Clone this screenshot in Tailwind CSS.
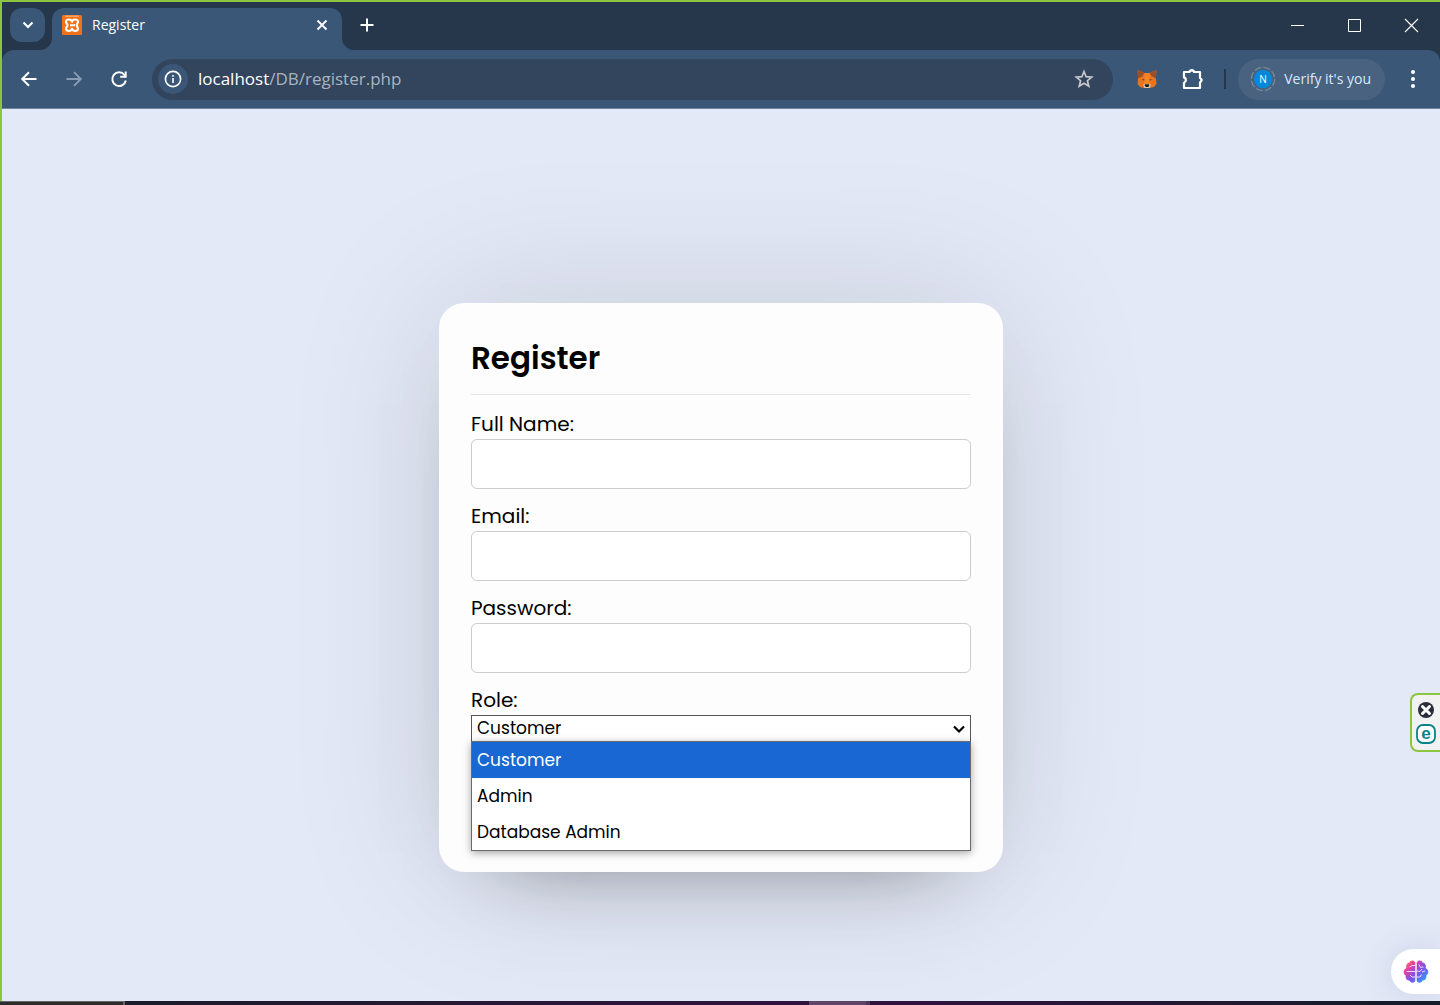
<!DOCTYPE html>
<html lang="en">
<head>
<meta charset="utf-8">
<meta name="viewport" content="width=device-width, initial-scale=1">
<title>Register</title>
<script src="https://cdn.jsdelivr.net/npm/@tailwindcss/browser@4"></script>
</head>
<body class="flex min-h-screen flex-col overflow-x-hidden bg-[#e4e9f7] font-['Poppins','Inter',sans-serif] text-black">
<div class="flex grow flex-col border-t-2 border-l-2 border-[#8cc63f]">

  <!-- Browser chrome -->
  <header class="relative z-10 bg-[#26374c] font-['Segoe_UI','Open_Sans',sans-serif] text-white">
    <div class="flex h-12 items-start">
      <button aria-label="Search tabs" class="mt-1.5 ml-2 flex h-[34px] w-[35px] items-center justify-center rounded-xl bg-[#3a5777]">
        <svg class="size-4" viewBox="0 0 16 16" fill="none" stroke="#fff" stroke-width="2"><path d="M3.500 5.500 8 10l4.500-4.500"/></svg>
      </button>
      <div class="relative mt-1.5 ml-[7px] flex h-[42px] w-[290px] items-center rounded-t-xl bg-[#3a5777] pr-3 pb-2 pl-2.5">
        <svg class="absolute bottom-0 -left-3 size-3" viewBox="0 0 12 12"><path d="M12 0v12H0A12 12 0 0 0 12 0Z" fill="#3a5777"/></svg>
        <svg class="absolute -right-3 bottom-0 size-3" viewBox="0 0 12 12"><path d="M0 0v12h12A12 12 0 0 1 0 0Z" fill="#3a5777"/></svg>
        <svg class="size-5" viewBox="0 0 20 20"><rect width="20" height="20" rx="1.500" fill="#f0731b"/><path d="M3 1.200h14" stroke="#f9b47c" stroke-width="1.200"/><path d="M10 6.800C9.500 3.800 4 3.800 4 7c0 1.500 1.500 1.800 1.500 3.300S4 12 4 13.500c0 3.200 5.500 3.200 6 .2.500 3 6 3 6-.2 0-1.500-1.300-1.900-1.300-3.400S16 8.500 16 7c0-3.200-5.500-3.200-6-.2ZM8 10.200h5" fill="none" stroke="#fff" stroke-width="2.100" stroke-linejoin="round"/></svg>
        <span class="ml-2.5 grow text-sm">Register</span>
        <button aria-label="Close tab"><svg class="size-4" viewBox="0 0 16 16" stroke="#fff" stroke-width="1.800"><path d="m3.500 3.500 9 9m0-9-9 9"/></svg></button>
      </div>
      <button aria-label="New tab" class="mt-[15px] ml-[17px]"><svg class="size-4" viewBox="0 0 16 16" stroke="#fff" stroke-width="2"><path d="M8 1.500v13M1.500 8h13"/></svg></button>
      <div class="mt-4 mr-[21px] ml-auto flex gap-[42px]">
        <button aria-label="Minimize"><svg class="size-[15px]" viewBox="0 0 15 15" stroke="#fff"><path d="M1 7.500h13"/></svg></button>
        <button aria-label="Maximize"><svg class="size-[15px]" viewBox="0 0 15 15" fill="none" stroke="#fff"><path d="M1.500 1.500h12v12h-12z"/></svg></button>
        <button aria-label="Close window"><svg class="size-[15px]" viewBox="0 0 15 15" stroke="#fff" stroke-width="1.100"><path d="m1 1 13 13m0-13L1 14"/></svg></button>
      </div>
    </div>

    <div class="flex h-[59px] items-center rounded-t-xl border-b border-[#7186a2] bg-[#3a5777] px-[17px]">
      <nav class="flex items-center gap-[25px]">
        <button aria-label="Back"><svg class="size-5" viewBox="0 0 20 20" fill="none" stroke="#fff" stroke-width="2"><path d="M17.500 10H3.500M10 3.200 3.200 10l6.800 6.800"/></svg></button>
        <button aria-label="Forward"><svg class="size-5" viewBox="0 0 20 20" fill="none" stroke="#8b9db3" stroke-width="1.800"><path d="M2.500 10h14M10 3.200l6.800 6.800-6.800 6.800"/></svg></button>
        <button aria-label="Reload"><svg class="size-5" viewBox="0 0 20 20" fill="none" stroke="#fff" stroke-width="2"><path d="M16.800 11.500A6.800 6.800 0 1 1 15.500 6l1.300 1.500"/><path d="M16.700 2.500v5.300h-5.500"/></svg></button>
      </nav>
      <div class="ml-[23px] flex h-[41px] grow items-center rounded-full bg-[#32455c] pr-[19px] pl-1.5">
        <button aria-label="View site information" class="flex size-[30px] items-center justify-center rounded-full bg-[#3a5777]">
          <svg class="size-[18px]" viewBox="0 0 18 18" fill="none" stroke="#fff" stroke-width="1.600"><circle cx="9" cy="9" r="7.600"/><path d="M9 8v5M9 5v1.700"/></svg>
        </button>
        <p class="ml-2.5 grow text-[17px] text-[#a9b4c3]"><span class="text-white">localhost</span>/DB/register.php</p>
        <button aria-label="Bookmark this tab"><svg class="size-5" viewBox="0 0 20 20" fill="none" stroke="#c6c8cc" stroke-width="1.700"><path d="m10 2.500 2.100 5.200 5.600.4-4.300 3.600 1.400 5.500L10 14.200l-4.800 3 1.400-5.500-4.300-3.600 5.600-.4Z"/></svg></button>
      </div>
      <button aria-label="MetaMask" class="ml-6">
        <svg class="size-5" viewBox="0 0 20 20"><path d="m.5 1 7 3h5l7-3-.7 7 .7 7-2.500 3-4 1H7l-4-1L.500 15l.7-7Z" fill="#e7741e"/><path d="m.5 1 7.200 3L5 7.500l-4 1.700Zm19 0-7.200 3L15 7.500l4 1.700Z" fill="#99502b"/><path d="m7.500 4-.5 11h6l-.5-11Z" fill="#f58425"/><path d="m4.500 10 3.200.5-.6 1.200Zm11 0-3.200.5.6 1.200Z" fill="#6b3a30"/><path d="m6 15.500 2-.5h4l2 .5-1.500 3.500h-5Z" fill="#d8c8b8"/><path d="M8 15.200h4l.3 1.600-1.300 1.200H9l-1.300-1.200Z" fill="#211c1c"/></svg>
      </button>
      <button aria-label="Extensions" class="ml-[25px]">
        <svg class="size-[22px]" viewBox="0 0 22 22"><path d="M2 4h5.500a2.300 2.300 0 0 1 4.500 0h6v6a2.200 2.200 0 0 1 0 4.200V20H2v-5.300a2.800 2.800 0 0 0 0-5.300Z" fill="none" stroke="#fff" stroke-width="2.200" stroke-linejoin="round"/><path d="M8 3.500a2 2 0 0 1 4 0ZM18.500 10a2 2 0 0 1 0 4Z" fill="#fff"/></svg>
      </button>
      <span class="mr-3 ml-5 h-5 w-0.5 bg-[#26374c]"></span>
      <button class="flex h-[41px] items-center rounded-full bg-[#486280] pr-3.5 pl-3 text-sm text-[#dbe7ff]">
        <svg class="size-[26px]" viewBox="0 0 26 26"><circle cx="13" cy="13" r="11.700" fill="none" stroke="#7d8893" stroke-width="1.300" stroke-dasharray="7 2.200"/><circle cx="13" cy="13" r="9.200" fill="#0288d8"/><text x="13" y="17" text-anchor="middle" font-family="Open Sans, sans-serif" font-size="10" fill="#fff">N</text></svg>
        <span class="ml-2">Verify it's you</span>
      </button>
      <button aria-label="Menu" class="ml-[18px]"><svg class="size-5" viewBox="0 0 20 20" fill="#fff"><circle cx="10" cy="3" r="2"/><circle cx="10" cy="10" r="2"/><circle cx="10" cy="17" r="2"/></svg></button>
    </div>
  </header>

  <!-- Registration page -->
  <main class="flex grow items-center justify-center pt-16">
    <form class="w-full max-w-[564px] rounded-[25px] bg-[#fdfdfd] px-8 pt-8 pb-[130px] shadow-[0_0_160px_rgba(0,0,0,0.12),0_40px_80px_-60px_rgba(0,0,0,0.5)]">
      <h1 class="mb-3.5 border-b border-[#e6e6e6] pt-1 pb-4 text-[31px] leading-[39px] font-semibold">Register</h1>
      <div class="flex flex-col gap-3 text-xl leading-[30px]">
        <div class="flex flex-col"><label for="name">Full Name:</label><input id="name" type="text" class="h-[50px] rounded-md border border-[#ccc] bg-white px-2.5 text-base"></div>
        <div class="flex flex-col"><label for="email">Email:</label><input id="email" type="email" class="h-[50px] rounded-md border border-[#ccc] bg-white px-2.5 text-base"></div>
        <div class="flex flex-col"><label for="password">Password:</label><input id="password" type="password" class="h-[50px] rounded-md border border-[#ccc] bg-white px-2.5 text-base"></div>
        <div class="relative flex flex-col">
          <label for="role">Role:</label>
          <select id="role" class="h-[27px] appearance-none border border-[#555] bg-white px-[5px] text-[17px] leading-6">
            <option>Customer</option><option>Admin</option><option>Database Admin</option>
          </select>
          <svg class="pointer-events-none absolute right-1 bottom-[5px] size-4" viewBox="0 0 16 16" fill="none" stroke="#000" stroke-width="2.200"><path d="m3 5.500 5 5 5-5"/></svg>
          <ul role="listbox" aria-label="Role" class="absolute inset-x-0 top-14 border border-[#6b6b6b] bg-white text-[17px] leading-9 shadow-[0_2px_8px_rgba(0,0,0,0.35)]">
            <li role="option" aria-selected="true" class="bg-[#1967d2] px-[5px] text-white">Customer</li>
            <li role="option" aria-selected="false" class="px-[5px]">Admin</li>
            <li role="option" aria-selected="false" class="px-[5px]">Database Admin</li>
          </ul>
        </div>
      </div>
    </form>
  </main>
</div>

<!-- Floating extension widgets -->
<aside class="fixed right-0 bottom-[253px] flex w-[30px] flex-col items-center gap-[5px] rounded-l-lg border-2 border-r-0 border-[#8cc63f] bg-[#f2f2f2] py-1.5">
  <button aria-label="Dismiss"><svg class="block size-[18px]" viewBox="0 0 18 18"><circle cx="9" cy="9" r="8" fill="#2a2f3a"/><path d="m5.500 5.500 7 7m0-7-7 7" stroke="#fff" stroke-width="3" stroke-linecap="round"/></svg></button>
  <button aria-label="Security status"><svg class="block size-5" viewBox="0 0 20 20"><rect x="1" y="1" width="18" height="18" rx="6" fill="#fff" stroke="#0b8289" stroke-width="1.800"/><text x="10" y="14.500" text-anchor="middle" font-family="Liberation Sans, sans-serif" font-size="17" font-weight="700" fill="#0b8289">e</text></svg></button>
</aside>
<button aria-label="Assistant" class="fixed right-0 bottom-[11px] flex h-[45px] w-[49px] items-center rounded-l-full bg-white pl-3 shadow-[0_0_32px_rgba(60,80,130,0.14)]">
  <svg class="size-[26px]" viewBox="0 0 26 26">
    <defs><linearGradient id="brain" x1="0" y1="0" x2="1" y2="1"><stop offset="0" stop-color="#ff9d2e"/><stop offset=".25" stop-color="#ef3f9c"/><stop offset=".55" stop-color="#8050ec"/><stop offset="1" stop-color="#16b5f5"/></linearGradient></defs>
    <path d="M12.300 3.500C11 .5 7 1 6.500 3.500 3.500 4 2.500 7 3.500 9 0 10.500 0 15 2.700 16.500c-.5 3 1.300 5 3.800 5 1.200 3 5 3 5.800 0Zm1.400 0C15 .5 19 1 19.500 3.500c3 .5 4 3.500 3 5.500 3.500 1.500 3.500 6 .8 7.500.5 3-1.300 5-3.800 5-1.200 3-5 3-5.800 0Z" fill="url(#brain)"/>
    <path d="M12 6.500H9L6.500 8M12 12.500H3.500M12 18H9l-2-2M14 18h3l1.500-2.500M14 12l3 .5 2-2.500M16 5.500l1.500 3 3-.5M19 13l3-1" fill="none" stroke="#f3d8f5" stroke-width="1"/>
  </svg>
</button>

<!-- Top edge of the desktop taskbar -->
<footer class="flex h-1 bg-linear-to-r from-[#1c1c2c] from-10% via-[#30123f] via-60% to-[#151b28]">
  <span class="w-[125px] border-t border-r-2 border-[#666] bg-[#2c2c2c]"></span>
  <span class="ml-[684px] w-[61px] border-r-4 border-[#4c3555] bg-[#5e4766]"></span>
</footer>
</body>
</html>
